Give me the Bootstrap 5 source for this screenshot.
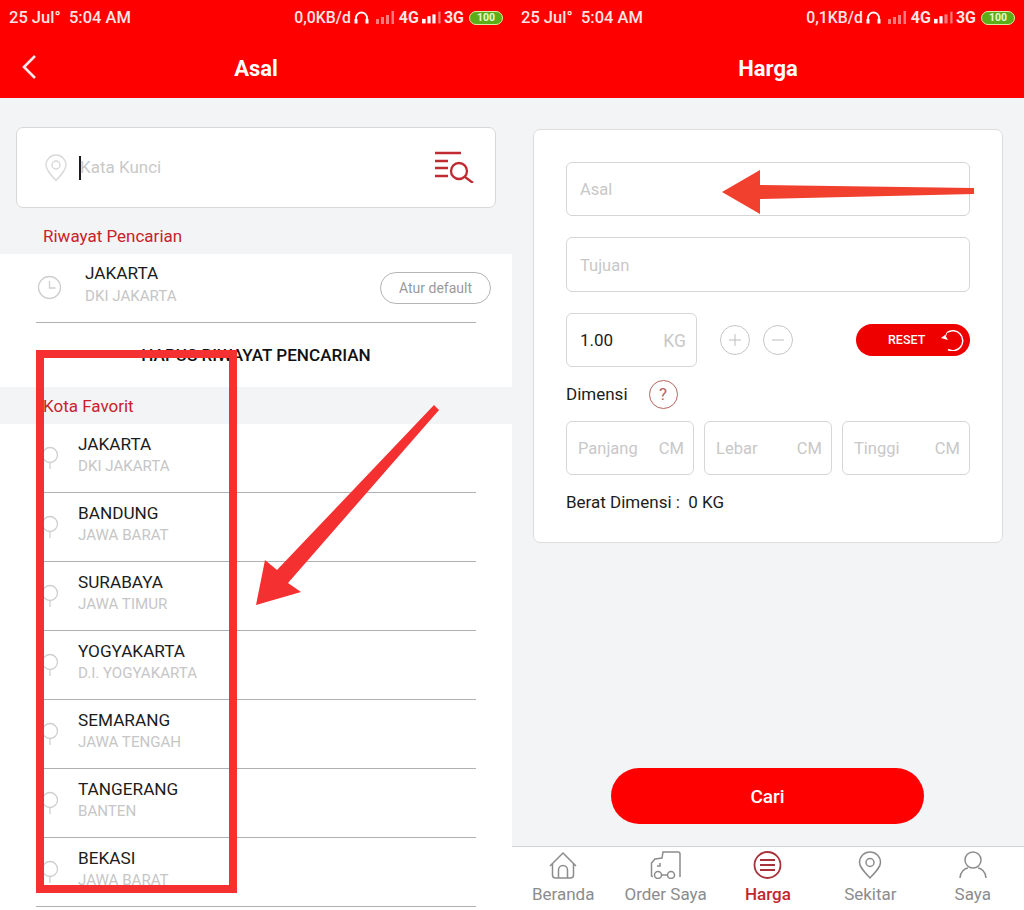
<!DOCTYPE html>
<html lang="id">
<head>
<meta charset="utf-8">
<title>Asal dan Harga</title>
<link href="https://cdn.jsdelivr.net/npm/bootstrap@5.3.0/dist/css/bootstrap.min.css" rel="stylesheet">
<style>
html,body{margin:0;height:910px;overflow:hidden;background:#f3f4f5}
body{font-family:Roboto,"Liberation Sans",sans-serif;color:#1c1c1c}
.stage{width:1024px;height:910px;position:relative;overflow:hidden}
.phone{width:512px;height:910px;background:#f3f4f5;overflow:hidden}
.topbar{height:98px;background:#fe0000;color:#fff}
.statusline{height:36px;padding:0 9px 0 9px;font-size:16.5px;font-weight:500;color:#fbe4e4}
.speedtxt{font-size:15.8px;margin-right:3px}
.nettxt{font-size:16px;font-weight:700;margin:0 3px}
.titleline{height:62px;position:relative;font-size:22px;font-weight:700;padding-top:2px}
.backicon{position:absolute;left:21px;top:18px}
.batt{width:34px;height:14px;border:1.5px solid #d9eb9f;border-radius:8px;background:#5cae18;color:#eaf7d5;font-size:10.5px;line-height:11px;text-align:center;font-weight:700;margin-left:2px}
.searchbox{height:81px;margin:29px 16px 0;background:#fff;border:1px solid #d8d8d8;border-radius:7px;padding:0 20px 0 27px}
.caret{width:2px;height:24px;background:#1a1a1a;margin-left:11px}
.ph{color:#c9c9c9;font-size:17px;padding-top:0;margin-left:-1px}
.searchglass{margin-bottom:2px}
.seclabel{color:#c8222a;font-size:17px;padding-left:43px;line-height:25px}
.lab1{height:46px;padding-top:16px}
.lab2{height:37px;padding-top:7px}
.whitepart{background:#fff}
.hist{height:69px;margin:0 36px;border-bottom:1px solid #b0b0b0;position:relative}
.histicon{position:absolute;left:1px;top:21px}
.cname{font-size:17.2px;line-height:20px;color:#1c1c1c}
.cprov{font-size:15.1px;line-height:20px;color:#c6c6c6;margin-top:3px}
.favtext .cprov{margin-top:2px}
.histtext{position:absolute;left:49px;top:9px}
.atur{position:absolute;left:344px;top:18px;width:111px;height:32px;border:1.5px solid #b5b5b5;border-radius:16px;font-size:14px;color:#9a9a9a;line-height:31px;text-align:center;background:#fff}
.hapus{height:64px;font-size:17.1px;font-weight:500;color:#111;padding-top:2px}
.favrow{height:69px;margin:0 36px;border-bottom:1px solid #b0b0b0;position:relative}
.favtext{position:absolute;left:42px;top:10px}
.favpin{position:absolute;left:4px;top:22px}
.formcard{margin:31px 21px 0;height:414px;background:#fff;border:1px solid #dcdcdc;border-radius:7px;padding:32px 32px 0}
.field{border:1px solid #d6d6d6;border-radius:6px;background:#fff;padding:2px 13px 0;color:#c8c8c8;font-size:16.5px}
.fieldasal{height:54px;margin-bottom:21px}
.fieldtujuan{height:55px;margin-bottom:21px;padding-top:3px}
.fieldkg{width:131px;height:54px;padding-right:10px;font-size:17.5px}
.kgval{color:#1c1c1c;font-size:17px}
.roundbtn{width:30px;height:30px;border:1px solid #c6c6c6;border-radius:50%;color:#b8b8b8}
.plusbtn{margin-left:23px}
.minusbtn{margin-left:13px}
.resetpill{width:114px;height:32px;background:#ee0000;border-radius:16px;color:#fff;font-size:12.5px;font-weight:500;padding-left:32px;gap:15px}
.dimline{height:54px;font-size:17px;color:#1c1c1c;padding-top:1px}
.qmark{width:29px;height:29px;border:1.5px solid #b5645f;border-radius:50%;color:#b5645f;font-size:17px;margin-left:21px}
.fielddim{width:128px;height:54px;padding:2px 9px 0 11px}
.beratline{font-size:17px;margin-top:17px;line-height:20px;color:#1c1c1c}
.carirow{height:303px;padding-top:225px;padding-right:1px}
.caribtn{width:313px;height:56px;background:#fe0000;border-radius:28px;color:#fff;font-size:19px;font-weight:500;border:0;padding-top:4px}
.tabbar{height:64px;background:#fff;border-top:1px solid #d2d2d2}
.tabitem{width:102.4px;color:#8c8c8c;font-size:17px;line-height:20px;padding-top:4px}
.tabitem svg{display:block;margin:0 auto 5px}
.tabon{color:#c3262e;font-weight:500}
.mark-rect{position:absolute;left:36px;top:350px;width:201px;height:543px;border:8.5px solid #f43030;pointer-events:none}
.mark-arrow{position:absolute;left:0;top:0;pointer-events:none}
</style>
</head>
<body>
<div class="stage">
<div class="d-flex">
  <div class="phone d-flex flex-column">
    <div class="topbar">
      <div class="statusline d-flex align-items-center justify-content-between">
        <span>25 Jul°&nbsp; 5:04 AM</span>
        <span class="d-flex align-items-center">
          <span class="speedtxt">0,0KB/d</span>
          <svg width="15" height="14" viewBox="0 0 15 14" fill="none" stroke="#fff" stroke-width="1.800"><path d="M2 11V7a5.500 5.500 0 0 1 11 0v4"/><path d="M0.500 8h3v4.500h-3zM11.500 8h3v4.500h-3z" fill="#fff" stroke="none"/></svg>
          <svg style="margin-left:7px" width="20" height="14" viewBox="0 0 20 14" fill="#f97a7a"><rect x="0" y="8" width="3" height="5"/><rect x="5" y="6" width="3" height="7"/><rect x="10" y="4" width="3" height="9"/><rect x="15.500" y="0" width="2.500" height="13"/></svg>
          <span class="nettxt">4G</span>
          <svg width="19" height="14" viewBox="0 0 21 14"><rect x="0" y="8" width="4" height="5" fill="#fff"/><rect x="6" y="5" width="3.500" height="8" fill="#fff"/><rect x="11.500" y="3" width="3.500" height="10" fill="#fff"/><rect x="18" y="0" width="2.500" height="13" fill="#f97a7a"/></svg>
          <span class="nettxt">3G</span>
          <span class="batt">100</span>
        </span>
      </div>
      <div class="titleline d-flex align-items-center justify-content-center">
        <svg class="backicon" width="16" height="26" viewBox="0 0 16 26" fill="none" stroke="#fbe9e9" stroke-width="2.600"><path d="M14 2 3 13l11 11"/></svg>
        <span>Asal</span>
      </div>
    </div>
    <div class="searchbox d-flex align-items-center">
      <svg width="24" height="28" viewBox="0 0 24 28" fill="none" stroke="#d9d9d9" stroke-width="1.400"><path d="M12 26.500C6 20 2 15.500 2 11a10 10 0 0 1 20 0c0 4.500-4 9-10 15.500z"/><circle cx="12" cy="11" r="4"/></svg>
      <span class="caret"></span>
      <span class="ph">Kata Kunci</span>
      <svg class="ms-auto searchglass" width="40" height="32" viewBox="0 0 40 32" fill="none" stroke="#c02a30" stroke-width="2.300"><path d="M0 2h26M0 10h13M0 17h13M0 25h13"/><circle cx="24" cy="20" r="8"/><path d="m30 26 8 6"/></svg>
    </div>
    <div class="seclabel lab1">Riwayat Pencarian</div>
    <div class="whitepart">
      <div class="hist">
        <svg class="histicon" width="25" height="25" viewBox="0 0 25 25" fill="none" stroke="#cfcfcf" stroke-width="1.300"><circle cx="12.500" cy="12.500" r="11"/><path d="M12.500 6v7h6"/></svg>
        <div class="histtext"><div class="cname">JAKARTA</div><div class="cprov">DKI JAKARTA</div></div>
        <div class="atur">Atur default</div>
      </div>
      <div class="hapus d-flex align-items-center justify-content-center">HAPUS RIWAYAT PENCARIAN</div>
    </div>
    <div class="seclabel lab2">Kota Favorit</div>
    <div class="whitepart flex-grow-1">
      <div class="favrow"><svg class="favpin" width="20" height="26" viewBox="0 0 20 26" fill="none" stroke="#cfcfcf" stroke-width="1.300"><circle cx="10" cy="9" r="7.500"/><path d="M10 17v6"/></svg><div class="favtext"><div class="cname">JAKARTA</div><div class="cprov">DKI JAKARTA</div></div></div>
      <div class="favrow"><svg class="favpin" width="20" height="26" viewBox="0 0 20 26" fill="none" stroke="#cfcfcf" stroke-width="1.300"><circle cx="10" cy="9" r="7.500"/><path d="M10 17v6"/></svg><div class="favtext"><div class="cname">BANDUNG</div><div class="cprov">JAWA BARAT</div></div></div>
      <div class="favrow"><svg class="favpin" width="20" height="26" viewBox="0 0 20 26" fill="none" stroke="#cfcfcf" stroke-width="1.300"><circle cx="10" cy="9" r="7.500"/><path d="M10 17v6"/></svg><div class="favtext"><div class="cname">SURABAYA</div><div class="cprov">JAWA TIMUR</div></div></div>
      <div class="favrow"><svg class="favpin" width="20" height="26" viewBox="0 0 20 26" fill="none" stroke="#cfcfcf" stroke-width="1.300"><circle cx="10" cy="9" r="7.500"/><path d="M10 17v6"/></svg><div class="favtext"><div class="cname">YOGYAKARTA</div><div class="cprov">D.I. YOGYAKARTA</div></div></div>
      <div class="favrow"><svg class="favpin" width="20" height="26" viewBox="0 0 20 26" fill="none" stroke="#cfcfcf" stroke-width="1.300"><circle cx="10" cy="9" r="7.500"/><path d="M10 17v6"/></svg><div class="favtext"><div class="cname">SEMARANG</div><div class="cprov">JAWA TENGAH</div></div></div>
      <div class="favrow"><svg class="favpin" width="20" height="26" viewBox="0 0 20 26" fill="none" stroke="#cfcfcf" stroke-width="1.300"><circle cx="10" cy="9" r="7.500"/><path d="M10 17v6"/></svg><div class="favtext"><div class="cname">TANGERANG</div><div class="cprov">BANTEN</div></div></div>
      <div class="favrow"><svg class="favpin" width="20" height="26" viewBox="0 0 20 26" fill="none" stroke="#cfcfcf" stroke-width="1.300"><circle cx="10" cy="9" r="7.500"/><path d="M10 17v6"/></svg><div class="favtext"><div class="cname">BEKASI</div><div class="cprov">JAWA BARAT</div></div></div>
    </div>
  </div>

  <div class="phone d-flex flex-column">
    <div class="topbar">
      <div class="statusline d-flex align-items-center justify-content-between">
        <span>25 Jul°&nbsp; 5:04 AM</span>
        <span class="d-flex align-items-center">
          <span class="speedtxt">0,1KB/d</span>
          <svg width="15" height="14" viewBox="0 0 15 14" fill="none" stroke="#fff" stroke-width="1.800"><path d="M2 11V7a5.500 5.500 0 0 1 11 0v4"/><path d="M0.500 8h3v4.500h-3zM11.500 8h3v4.500h-3z" fill="#fff" stroke="none"/></svg>
          <svg style="margin-left:7px" width="20" height="14" viewBox="0 0 20 14" fill="#f97a7a"><rect x="0" y="8" width="3" height="5"/><rect x="5" y="6" width="3" height="7"/><rect x="10" y="4" width="3" height="9"/><rect x="15.500" y="0" width="2.500" height="13"/></svg>
          <span class="nettxt">4G</span>
          <svg width="19" height="14" viewBox="0 0 21 14"><rect x="0" y="8" width="4" height="5" fill="#fff"/><rect x="6" y="5" width="3.500" height="8" fill="#fff"/><rect x="11.500" y="3" width="3.500" height="10" fill="#f97a7a"/><rect x="18" y="0" width="2.500" height="13" fill="#f97a7a"/></svg>
          <span class="nettxt">3G</span>
          <span class="batt">100</span>
        </span>
      </div>
      <div class="titleline d-flex align-items-center justify-content-center"><span>Harga</span></div>
    </div>
    <div class="formcard">
      <div class="field fieldasal d-flex align-items-center">Asal</div>
      <div class="field fieldtujuan d-flex align-items-center">Tujuan</div>
      <div class="d-flex align-items-center">
        <div class="field fieldkg d-flex align-items-center justify-content-between"><span class="kgval">1.00</span><span>KG</span></div>
        <div class="roundbtn plusbtn d-flex align-items-center justify-content-center"><svg width="12" height="12" viewBox="0 0 12 12" stroke="#bdbdbd" stroke-width="1"><path d="M6 0v12M0 6h12"/></svg></div>
        <div class="roundbtn minusbtn d-flex align-items-center justify-content-center"><svg width="12" height="12" viewBox="0 0 12 12" stroke="#bdbdbd" stroke-width="1"><path d="M0 6h12"/></svg></div>
        <div class="resetpill d-flex align-items-center ms-auto">
          <span>RESET</span>
          <svg width="24" height="22" viewBox="0 0 24 22" fill="none" stroke="#fff" stroke-width="1.500"><path d="M7 3.500a10 10 0 1 1 1 17"/><path d="M1 9l4-3 3 5z" fill="#fff" stroke="none"/><path d="M4.500 9.500 7 3.500" stroke-width="1"/></svg>
        </div>
      </div>
      <div class="dimline d-flex align-items-center">Dimensi<span class="qmark d-flex align-items-center justify-content-center">?</span></div>
      <div class="d-flex justify-content-between">
        <div class="field fielddim d-flex align-items-center justify-content-between"><span>Panjang</span><span>CM</span></div>
        <div class="field fielddim d-flex align-items-center justify-content-between"><span>Lebar</span><span>CM</span></div>
        <div class="field fielddim d-flex align-items-center justify-content-between"><span>Tinggi</span><span>CM</span></div>
      </div>
      <div class="beratline">Berat Dimensi :&nbsp; 0 KG</div>
    </div>
    <div class="carirow d-flex justify-content-center"><button class="caribtn" type="button">Cari</button></div>
    <div class="tabbar d-flex text-center">
      <div class="tabitem">
        <svg width="30" height="28" viewBox="0 0 30 28" fill="none" stroke="#8c8c8c" stroke-width="1.500"><path d="M2 15 15 2l13 13M4.500 13v11a3 3 0 0 0 3 3h15a3 3 0 0 0 3-3V13"/><path d="M10.500 27v-8a4.500 4.500 0 0 1 9 0v8"/></svg>
        Beranda
      </div>
      <div class="tabitem">
        <svg width="32" height="28" viewBox="0 0 32 28" fill="none" stroke="#8c8c8c" stroke-width="1.500"><path d="M30 26V3a2 2 0 0 0-2-2H13l-1 6-7 1-3.500 4v12.500a1 1 0 0 0 1 1H3"/><path d="M12 24h5"/><circle cx="8" cy="24" r="3.500"/><circle cx="21" cy="24" r="3.500"/><path d="M10 12v3H7"/></svg>
        Order Saya
      </div>
      <div class="tabitem tabon">
        <svg width="29" height="28" viewBox="0 0 29 28" fill="none" stroke="#a8323a" stroke-width="1.800"><circle cx="14.500" cy="14" r="13"/><path d="M7 9h15M7 14h15M7 19h15"/></svg>
        Harga
      </div>
      <div class="tabitem">
        <svg width="24" height="28" viewBox="0 0 24 28" fill="none" stroke="#8c8c8c" stroke-width="1.500"><path d="M12 27C6 20.500 1.500 16 1.500 11.500a10.500 10.500 0 0 1 21 0C22.500 16 18 20.500 12 27z"/><circle cx="12" cy="11.500" r="4"/></svg>
        Sekitar
      </div>
      <div class="tabitem">
        <svg width="30" height="28" viewBox="0 0 30 28" fill="none" stroke="#8c8c8c" stroke-width="1.500"><circle cx="15" cy="9" r="8"/><path d="M2 27c0-6 5-10 8-10M28 27c0-6-5-10-8-10"/></svg>
        Saya
      </div>
    </div>
  </div>
</div>
<div class="mark-rect"></div>
<svg class="mark-arrow" width="1024" height="910" viewBox="0 0 1024 910">
  <polygon points="434,405 439,410 288,583 301,592 256,605 265,560 277,570" fill="#f43030"/>
  <polygon points="974,188 974,194 760,199 760,214 722,192 760,170 760,185" fill="#f2402f"/>
</svg>
</div>
</body>
</html>
